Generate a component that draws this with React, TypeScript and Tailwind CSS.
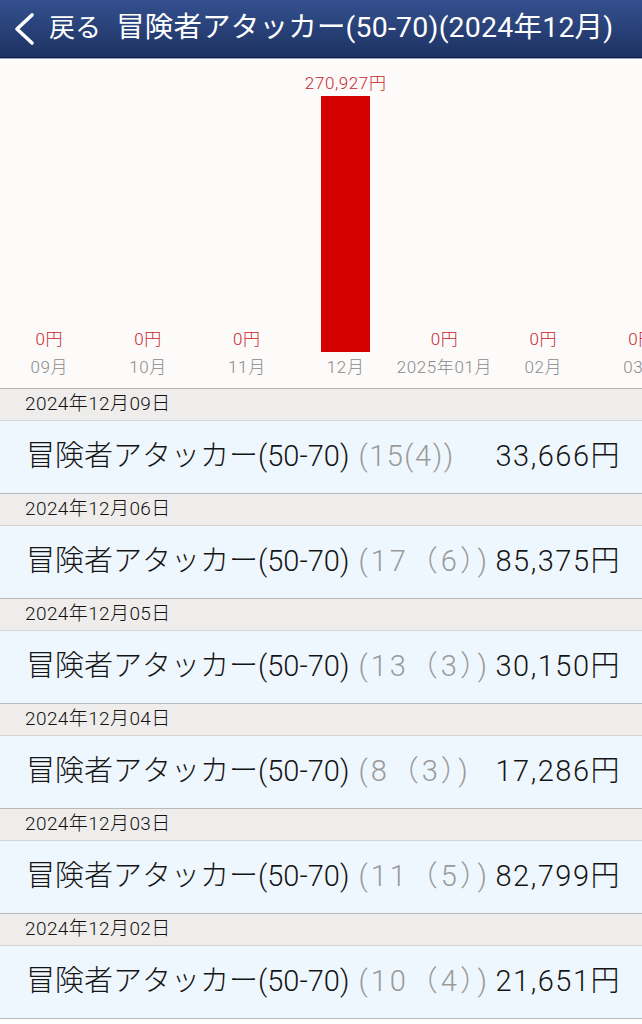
const FONT = "font-['Helvetica_Neue','Roboto','Noto_Sans_CJK_JP',sans-serif]";

const MONTHS = [
  { label: "09月", value: 0 },
  { label: "10月", value: 0 },
  { label: "11月", value: 0 },
  { label: "12月", value: 270927 },
  { label: "2025年01月", value: 0 },
  { label: "02月", value: 0 },
  { label: "03月", value: 0 },
];

const ROWS = [
  { date: "2024年12月09日", count: "15(4)", amount: 33666 },
  { date: "2024年12月06日", count: "17（6）", amount: 85375 },
  { date: "2024年12月05日", count: "13（3）", amount: 30150 },
  { date: "2024年12月04日", count: "8（3）", amount: 17286 },
  { date: "2024年12月03日", count: "11（5）", amount: 82799 },
  { date: "2024年12月02日", count: "10（4）", amount: 21651 },
];

const MAX = 270927;
const yen = (n: number) => n.toLocaleString("ja-JP") + "円";

function Header() {
  return (
    <header className="h-[59px] border-b border-[#9ba4cf] bg-gradient-to-b from-[#34508e] to-[#1d3262] text-white">
      <div className="flex h-[58px] items-center border-b border-[#0f1c3d]">
        <svg viewBox="0 0 24 34" className="ml-[12px] h-[34px] w-[24px]" fill="none">
          <polyline
            points="20,3 5,17 20,31"
            stroke="white"
            strokeWidth="3.6"
            strokeLinecap="round"
            strokeLinejoin="round"
          />
        </svg>
        <span className="ml-[13px] text-[26px]">戻る</span>
        <span className="ml-[15px] whitespace-nowrap text-[28.5px] tracking-[0.2px]">
          冒険者アタッカー(50-70)(2024年12月)
        </span>
      </div>
    </header>
  );
}

function Chart() {
  return (
    <div className="flex h-[330px] overflow-hidden border-b border-[#b4b4b4] bg-[#fcfbfa] font-light">
      {MONTHS.map((m) => {
        const h = (m.value / MAX) * 256;
        return (
          <div key={m.label} className="flex w-[98.77px] shrink-0 flex-col items-center">
            <div className="flex h-[293px] w-full flex-col items-center justify-end">
              <div className="mb-[3px] whitespace-nowrap text-[17px] leading-[20px] tracking-[0.6px] text-[#c81e2c]">
                {m.value > 0 ? yen(m.value) : "0円"}
              </div>
              {m.value > 0 && (
                <div className="w-[49px] bg-[#d40000]" style={{ height: h }} />
              )}
            </div>
            <div className="mt-[5px] whitespace-nowrap text-[17px] leading-[20px] tracking-[0.6px] text-[#8a8a8a]">
              {m.label}
            </div>
          </div>
        );
      })}
    </div>
  );
}

function Section({ date, count, amount }: { date: string; count: string; amount: number }) {
  const wide = count.includes("（");
  return (
    <div>
      <div className="flex h-[32px] items-center border-b border-[#d4d4d4] bg-[#efedec] pl-[25px] text-[19px] font-light tracking-[0.4px] text-[#111]">
        {date}
      </div>
      <div className="flex h-[73px] items-center border-b border-[#b9b9b9] bg-[#eff7fe] pl-[26px] pr-[21px] text-[29px] font-light text-[#151515]">
        <span className="whitespace-nowrap">冒険者アタッカー(50-70)</span>
        <span
          className={`ml-[9px] whitespace-nowrap text-[#9a9a9a] ${
            wide ? "tracking-[3px]" : "tracking-[1.5px]"
          }`}
        >
          ({count})
        </span>
        <span className="ml-auto whitespace-nowrap tracking-[1.5px]">{yen(amount)}</span>
      </div>
    </div>
  );
}

export default function App() {
  return (
    <div className={`h-[1024px] w-[642px] overflow-hidden bg-white ${FONT}`}>
      <Header />
      <Chart />
      {ROWS.map((r) => (
        <Section key={r.date} {...r} />
      ))}
    </div>
  );
}
